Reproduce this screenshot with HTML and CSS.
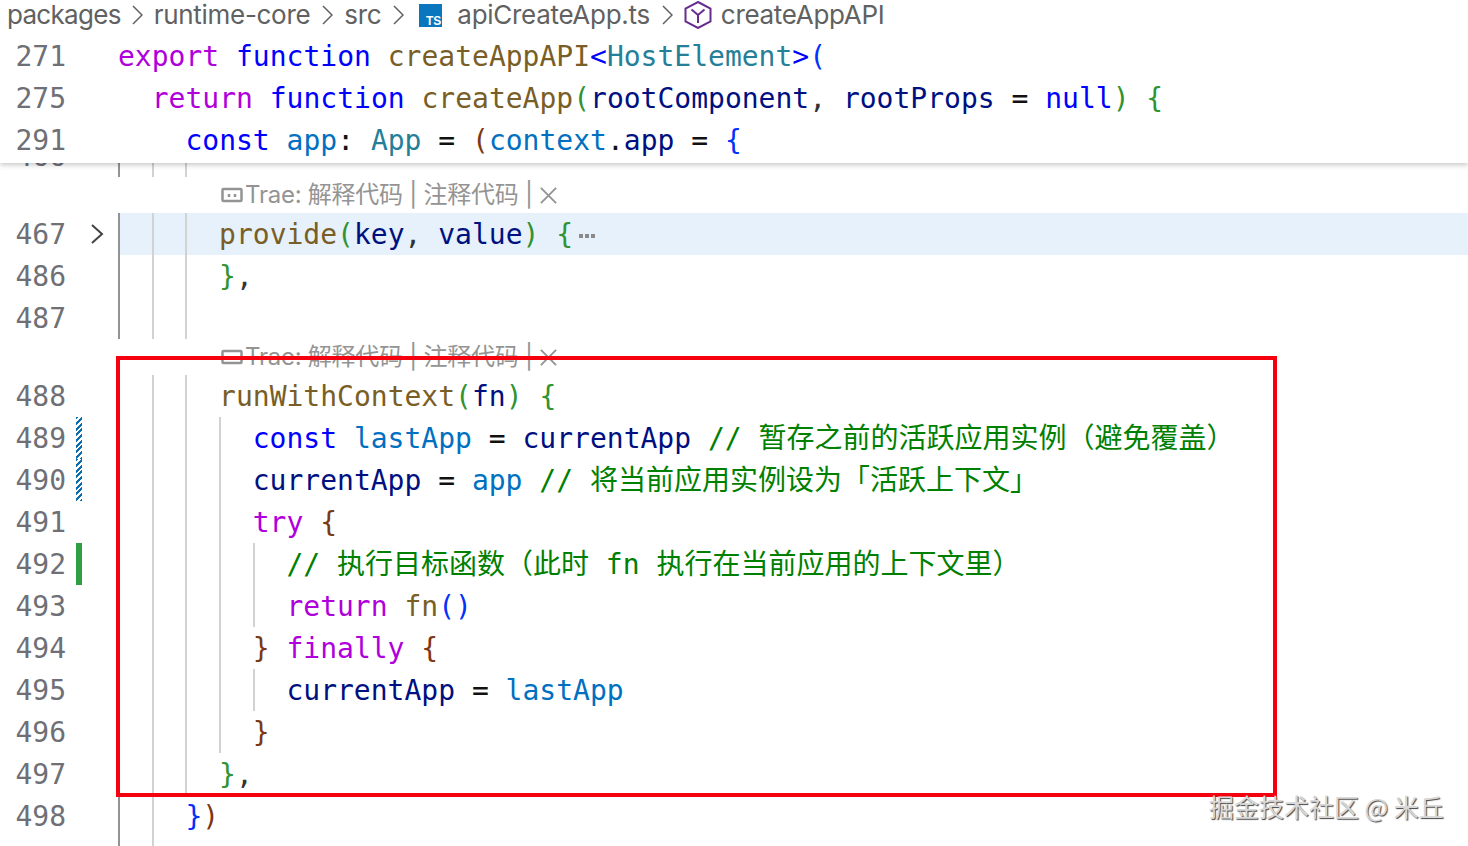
FILE: index.html
```html
<!DOCTYPE html>
<html lang="zh">
<head>
<meta charset="utf-8">
<title>apiCreateApp.ts</title>
<link rel="stylesheet" href="styles.css">
</head>
<body>
<div class="page">
  <div class="sticky">
    <nav class="crumbs">
      <span class="first">packages</span>
      <svg class="chev" viewBox="0 0 12 24"><path d="M2 3l9 9-9 9"/></svg>
      <span>runtime-core</span>
      <svg class="chev" viewBox="0 0 12 24"><path d="M2 3l9 9-9 9"/></svg>
      <span>src</span>
      <svg class="chev" viewBox="0 0 12 24"><path d="M2 3l9 9-9 9"/></svg>
      <span class="ts"><span class="ts-label">TS</span></span>
      <span class="file">apiCreateApp.ts</span>
      <svg class="chev" viewBox="0 0 12 24"><path d="M2 3l9 9-9 9"/></svg>
      <svg class="cube" viewBox="0 0 28 28"><path d="M14 1l12.500 6.500v13L14 27 1.500 20.500v-13z"/><path d="M7.500 8.500l6.500 5.500 6.500-5.500M14 14v8"/></svg>
      <span>createAppAPI</span>
    </nav>
    <div class="row"><span class="num">271</span><span class="gut"></span><div class="code"><span class="txt"><span class="k">export</span> <span class="b">function</span> <span class="f">createAppAPI</span><span class="b">&lt;</span><span class="t">HostElement</span><span class="b">&gt;</span><span class="bl">(</span></span></div></div>
    <div class="row"><span class="num">275</span><span class="gut"></span><div class="code"><span class="txt">  <span class="k">return</span> <span class="b">function</span> <span class="f">createApp</span><span class="g">(</span><span class="v">rootComponent</span><span class="o">,</span> <span class="v">rootProps</span> <span class="e">=</span> <span class="b">null</span><span class="g">)</span> <span class="g">{</span></span></div></div>
    <div class="row"><span class="num">291</span><span class="gut"></span><div class="code"><span class="txt">    <span class="b">const</span> <span class="c">app</span><span class="e">:</span> <span class="t">App</span> <span class="e">=</span> <span class="br">(</span><span class="c">context</span><span class="e">.</span><span class="v">app</span> <span class="e">=</span> <span class="bl">{</span></span></div></div>
  </div>

  <div class="clip">
    <div class="row"><span class="num">466</span><span class="gut"></span><div class="code"><i class="ind act"></i><i class="ind"></i><i class="ind"></i></div></div>
  </div>

  <div class="lens"><svg class="bot" viewBox="0 0 22 16"><rect x="1.500" y="2" width="19" height="12" rx="1"/><path class="dots" d="M8 7v3M14 7v3"/></svg><span>Trae: 解释代码 | 注释代码 |</span><svg class="x" viewBox="0 0 20 20"><path d="M2 2l16 16M18 2L2 18"/></svg></div>
  <div class="row hl"><span class="num">467</span><span class="gut"><svg class="fold" viewBox="0 0 14 24"><path d="M2 3l10 9-10 9"/></svg></span><div class="code"><i class="ind act"></i><i class="ind"></i><i class="ind"></i><span class="txt"><span class="f">provide</span><span class="g">(</span><span class="v">key</span><span class="o">,</span> <span class="v">value</span><span class="g">)</span> <span class="g">{</span></span><svg class="more" viewBox="0 0 16 4"><path d="M0 0h4v4H0zM6 0h4v4H6zM12 0h4v4h-4z"/></svg></div></div>
  <div class="row"><span class="num">486</span><span class="gut"></span><div class="code"><i class="ind act"></i><i class="ind"></i><i class="ind"></i><span class="txt"><span class="g">}</span><span class="o">,</span></span></div></div>
  <div class="row"><span class="num">487</span><span class="gut"></span><div class="code"><i class="ind act"></i><i class="ind"></i><i class="ind"></i></div></div>
  <div class="lens"><svg class="bot" viewBox="0 0 22 16"><rect x="1.500" y="2" width="19" height="12" rx="1"/><path class="dots" d="M8 7v3M14 7v3"/></svg><span>Trae: 解释代码 | 注释代码 |</span><svg class="x" viewBox="0 0 20 20"><path d="M2 2l16 16M18 2L2 18"/></svg></div>
  <div class="row"><span class="num">488</span><span class="gut"></span><div class="code"><i class="ind act"></i><i class="ind"></i><i class="ind"></i><span class="txt"><span class="f">runWithContext</span><span class="g">(</span><span class="v">fn</span><span class="g">)</span> <span class="g">{</span></span></div></div>
  <div class="row"><span class="num">489</span><span class="gut"><i class="mod"></i></span><div class="code"><i class="ind act"></i><i class="ind"></i><i class="ind"></i><i class="ind"></i><span class="txt"><span class="b">const</span> <span class="c">lastApp</span> <span class="e">=</span> <span class="v">currentApp</span> <span class="cm">// 暂存之前的活跃应用实例（避免覆盖）</span></span></div></div>
  <div class="row"><span class="num">490</span><span class="gut"><i class="mod"></i></span><div class="code"><i class="ind act"></i><i class="ind"></i><i class="ind"></i><i class="ind"></i><span class="txt"><span class="v">currentApp</span> <span class="e">=</span> <span class="c">app</span> <span class="cm">// 将当前应用实例设为「活跃上下文」</span></span></div></div>
  <div class="row"><span class="num">491</span><span class="gut"></span><div class="code"><i class="ind act"></i><i class="ind"></i><i class="ind"></i><i class="ind"></i><span class="txt"><span class="k">try</span> <span class="br">{</span></span></div></div>
  <div class="row"><span class="num">492</span><span class="gut"><i class="add"></i></span><div class="code"><i class="ind act"></i><i class="ind"></i><i class="ind"></i><i class="ind"></i><i class="ind"></i><span class="txt"><span class="cm">// 执行目标函数（此时 fn 执行在当前应用的上下文里）</span></span></div></div>
  <div class="row"><span class="num">493</span><span class="gut"></span><div class="code"><i class="ind act"></i><i class="ind"></i><i class="ind"></i><i class="ind"></i><i class="ind"></i><span class="txt"><span class="k">return</span> <span class="f">fn</span><span class="bl">()</span></span></div></div>
  <div class="row"><span class="num">494</span><span class="gut"></span><div class="code"><i class="ind act"></i><i class="ind"></i><i class="ind"></i><i class="ind"></i><span class="txt"><span class="br">}</span> <span class="k">finally</span> <span class="br">{</span></span></div></div>
  <div class="row"><span class="num">495</span><span class="gut"></span><div class="code"><i class="ind act"></i><i class="ind"></i><i class="ind"></i><i class="ind"></i><i class="ind"></i><span class="txt"><span class="v">currentApp</span> <span class="e">=</span> <span class="c">lastApp</span></span></div></div>
  <div class="row"><span class="num">496</span><span class="gut"></span><div class="code"><i class="ind act"></i><i class="ind"></i><i class="ind"></i><i class="ind"></i><span class="txt"><span class="br">}</span></span></div></div>
  <div class="row"><span class="num">497</span><span class="gut"></span><div class="code"><i class="ind act"></i><i class="ind"></i><i class="ind"></i><span class="txt"><span class="g">}</span><span class="o">,</span></span></div></div>
  <div class="row"><span class="num">498</span><span class="gut"></span><div class="code"><i class="ind act"></i><i class="ind"></i><span class="txt"><span class="bl">}</span><span class="br">)</span></span></div></div>
  <div class="row"><span class="num"></span><span class="gut"></span><div class="code"><i class="ind act"></i><i class="ind"></i></div></div>

  <div class="redbox"></div>
  <div class="mark">掘金技术社区 @ 米丘</div>
</div>
</body>
</html>
```

FILE: styles.css
```css
* { box-sizing: border-box; }
html, body { margin: 0; padding: 0; background: #fff; }
.page { position: relative; width: 1468px; height: 846px; overflow: hidden; background: #fff; }

.sticky { position: relative; z-index: 2; height: 163px; background: #fff; box-shadow: 0 2px 5px rgba(0, 0, 0, .22); }

.crumbs { display: flex; align-items: center; height: 35px; padding: 0 0 5px 7px; font: 26px/30px Inter, "Noto Sans CJK SC", sans-serif; letter-spacing: -0.3px; color: #616161; white-space: pre; }
.first { margin-right: -1px; letter-spacing: -0.7px; }
.chev { width: 12px; height: 24px; margin: 0 11px; flex: none; }
.chev path { fill: none; stroke: #616161; stroke-width: 1.500; }
.ts { position: relative; width: 23px; height: 23px; margin: 0 15px 0 4px; background: #0a76bd; flex: none; }
.ts-label { position: absolute; right: 1px; bottom: -2px; font: bold 12px/16px "Liberation Sans", sans-serif; letter-spacing: 0; color: #fff; }
.cube { width: 28px; height: 28px; margin-right: 9px; flex: none; }
.cube path { fill: none; stroke: #652d90; stroke-width: 2; }

.row { display: flex; height: 42px; font: 28px/44px "DejaVu Sans Mono", "Noto Sans CJK SC", monospace; white-space: pre; }
.num { width: 66px; text-align: right; color: #6e7076; flex: none; }
.gut { position: relative; display: flex; align-items: stretch; width: 52px; flex: none; }
.code { display: flex; flex: 1; min-width: 0; height: 42px; }
.txt { display: block; white-space: pre; }
.hl .code { background: #e6f1fb; }

.ind { display: block; width: 33.700px; height: 100%; border-left: 2px solid #d2d2d2; flex: none; }
.ind.act { border-left-color: #939393; }

.clip { display: flex; flex-direction: column; justify-content: flex-end; height: 14px; overflow: hidden; }
.clip .row { flex: none; }

.mod { display: block; width: 6px; margin-left: 10px; background: repeating-linear-gradient(135deg, #0a6db0 0 2px, #fff 2px 4px); }
.add { display: block; width: 6px; margin-left: 10px; background: #2ea043; }
.fold { width: 14px; height: 24px; margin: 9px 0 0 24px; }
.fold path { fill: none; stroke: #424242; stroke-width: 2; }

.k { color: #af00db; }
.b { color: #0000ff; }
.f { color: #795e26; }
.t { color: #267f99; }
.v { color: #001080; }
.c { color: #0070c1; }
.g { color: #319331; }
.br { color: #7b3814; }
.bl { color: #0431fa; }
.e { color: #111; }
.o { color: #333; }
.cm { color: #008000; }
.more { width: 16px; height: 4px; margin: 21px 0 0 6px; fill: #8a8a8a; flex: none; }

.lens { display: flex; align-items: center; height: 36px; padding-left: 221px; font: 24px/36px Inter, "Noto Sans CJK SC", sans-serif; letter-spacing: -0.25px; color: #949494; white-space: pre; }
.bot { width: 22px; height: 16px; margin-right: 2px; flex: none; }
.bot rect { fill: none; stroke: #949494; stroke-width: 2.500; }
.dots { fill: none; stroke: #949494; stroke-width: 2.500; }
.x { width: 19px; height: 19px; margin-left: 6px; flex: none; }
.x path { fill: none; stroke: #949494; stroke-width: 2; }

.redbox { position: absolute; z-index: 3; left: 116px; top: 356px; width: 1161px; height: 441px; border: 4px solid #f5000f; }
.mark { position: absolute; z-index: 4; left: 1209px; top: 790px; font: 25px/32px "Noto Sans CJK SC", sans-serif; color: #d8d8d8; text-shadow: 1px 1px 1px #444; white-space: pre; }
```
